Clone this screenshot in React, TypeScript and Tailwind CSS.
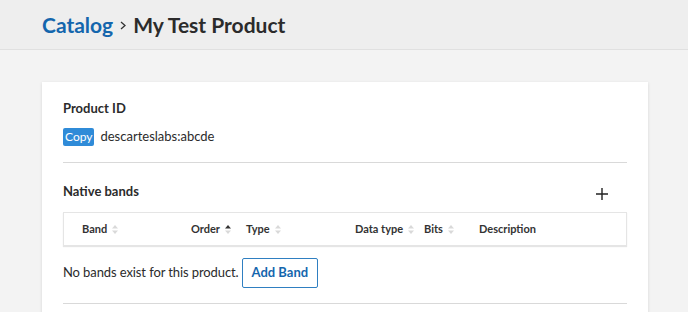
import React from 'react';

function SortIcon({ active }: { active?: 'up' | 'down' }) {
  return (
    <svg width="6" height="11" viewBox="0 0 6 11" className="ml-[5px] shrink-0">
      <path d="M3 1 L6 4.5 L0 4.5 Z" fill={active === 'up' ? '#333333' : '#d9d9d9'} />
      <path d="M3 10 L6 6.5 L0 6.5 Z" fill={active === 'down' ? '#333333' : '#d9d9d9'} />
    </svg>
  );
}

const columns: { label: string; width: string; pad: string; sort?: 'none' | 'up' }[] = [
  { label: 'Band', width: 'w-[119px]', pad: 'pl-[18px]', sort: 'none' },
  { label: 'Order', width: 'w-[55px]', pad: 'pl-[8px]', sort: 'up' },
  { label: 'Type', width: 'w-[109px]', pad: 'pl-[8px]', sort: 'none' },
  { label: 'Data type', width: 'w-[69px]', pad: 'pl-[8px]', sort: 'none' },
  { label: 'Bits', width: 'w-[55px]', pad: 'pl-[8px]', sort: 'none' },
  { label: 'Description', width: 'flex-1', pad: 'pl-[8px]' },
];

export default function App() {
  return (
    <div className="min-h-screen bg-[#f3f3f3] text-[#2b2b2b] font-['Lato','Liberation_Sans',sans-serif]">
      {/* header */}
      <div className="h-[50px] bg-[#eeeeee] border-b border-[#e0e0e0] flex items-center pl-[42px]">
        <a className="text-[21px] font-bold text-[#1466ad] leading-none">Catalog</a>
        <svg width="6" height="9" viewBox="0 0 6 9" className="mx-[7px] mt-[1px]">
          <path d="M1 1 L5 4.5 L1 8" fill="none" stroke="#333" strokeWidth="1.3" />
        </svg>
        <h1 className="text-[21px] font-bold text-[#2b2b2b] leading-none">My Test Product</h1>
      </div>

      {/* card */}
      <div className="mx-[42px] mt-[32px] w-[606px] bg-white shadow-[0_1px_3px_rgba(0,0,0,0.12)] px-[21px] pt-[17px] pb-4">
        <div className="text-[13px] font-bold leading-[18px]">Product ID</div>
        <div className="flex items-center mt-[10px]">
          <button className="bg-[#2f8bd8] text-white text-[12px] leading-[18px] px-[2px] rounded-[2px]">Copy</button>
          <span className="ml-[6px] text-[13px]">descarteslabs:abcde</span>
        </div>
        <div className="mt-[15px] border-t border-[#d9d9d9]" />

        <div className="flex items-center justify-between mt-[19px]">
          <div className="text-[13px] font-bold">Native bands</div>
          <svg width="12" height="12" viewBox="0 0 12 12" className="mr-[19px] mt-[5px]">
            <path d="M6 0 V12 M0 6 H12" stroke="#222" strokeWidth="1.4" />
          </svg>
        </div>

        <div className="mt-[11px] flex items-center h-[34px] border border-[#e5e5e5] shadow-[0_1px_1px_rgba(0,0,0,0.1)] text-[11px] font-bold text-[#333]">
          {columns.map((c) => (
            <div key={c.label} className={`${c.width} ${c.pad} flex items-center shrink-0`}>
              <span>{c.label}</span>
              {c.sort === 'up' && <SortIcon active="up" />}
              {c.sort === 'none' && <SortIcon />}
            </div>
          ))}
        </div>

        <div className="flex items-center mt-[12px]">
          <span className="text-[13px] tracking-[-0.1px]">No bands exist for this product.</span>
          <button className="ml-[3px] h-[30px] px-[9px] border border-[#2f7fc1] rounded-[2px] text-[13px] font-bold text-[#1466ad]">
            Add Band
          </button>
        </div>
        <div className="mt-[15px] border-t border-[#d9d9d9]" />
      </div>
    </div>
  );
}
